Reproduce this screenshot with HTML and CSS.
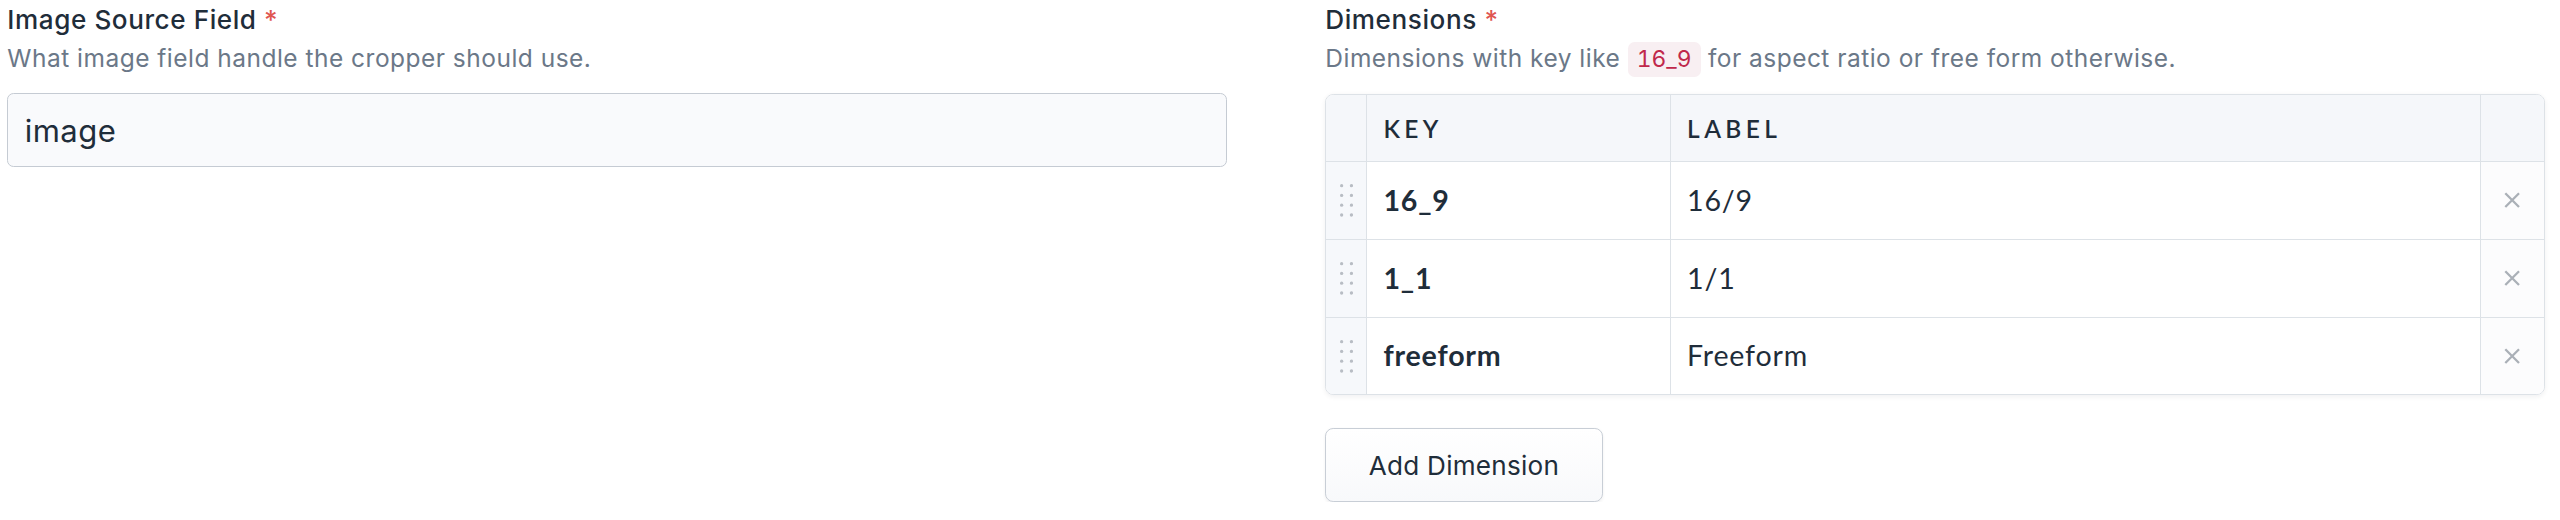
FILE: index.html
```html
<!DOCTYPE html>
<html lang="en">
<head>
<meta charset="utf-8">
<title>Cropper settings</title>
<link rel="stylesheet" href="styles.css">
</head>
<body>
<div class="page">
  <div class="field">
    <label class="label" for="src">Image Source Field <span class="req">*</span></label>
    <p class="desc">What image field handle the cropper should use.</p>
    <input id="src" class="input" type="text" value="image">
  </div>
  <div class="field">
    <div class="label">Dimensions <span class="req">*</span></div>
    <p class="desc">Dimensions with key like <code class="code">16_9</code> for aspect ratio or free form otherwise.</p>
    <div class="table">
      <div class="row head">
        <div class="cell drag"></div>
        <div class="cell th">Key</div>
        <div class="cell th">Label</div>
        <div class="cell del"></div>
      </div>
      <div class="row">
        <div class="cell drag"><svg class="dots" width="8" height="20" viewBox="0 0 8 20"><circle cx="1" cy="1" r="1"/><circle cx="7" cy="1" r="1"/><circle cx="1" cy="7" r="1"/><circle cx="7" cy="7" r="1"/><circle cx="1" cy="13" r="1"/><circle cx="7" cy="13" r="1"/><circle cx="1" cy="19" r="1"/><circle cx="7" cy="19" r="1"/></svg></div>
        <div class="cell key">16_9</div>
        <div class="cell val">16/9</div>
        <div class="cell del"><svg class="x" width="10" height="10" viewBox="0 0 10 10"><path d="M0.8 0.8L9.2 9.2M9.2 0.8L0.8 9.2"/></svg></div>
      </div>
      <div class="row">
        <div class="cell drag"><svg class="dots" width="8" height="20" viewBox="0 0 8 20"><circle cx="1" cy="1" r="1"/><circle cx="7" cy="1" r="1"/><circle cx="1" cy="7" r="1"/><circle cx="7" cy="7" r="1"/><circle cx="1" cy="13" r="1"/><circle cx="7" cy="13" r="1"/><circle cx="1" cy="19" r="1"/><circle cx="7" cy="19" r="1"/></svg></div>
        <div class="cell key">1_1</div>
        <div class="cell val">1/1</div>
        <div class="cell del"><svg class="x" width="10" height="10" viewBox="0 0 10 10"><path d="M0.8 0.8L9.2 9.2M9.2 0.8L0.8 9.2"/></svg></div>
      </div>
      <div class="row">
        <div class="cell drag"><svg class="dots" width="8" height="20" viewBox="0 0 8 20"><circle cx="1" cy="1" r="1"/><circle cx="7" cy="1" r="1"/><circle cx="1" cy="7" r="1"/><circle cx="7" cy="7" r="1"/><circle cx="1" cy="13" r="1"/><circle cx="7" cy="13" r="1"/><circle cx="1" cy="19" r="1"/><circle cx="7" cy="19" r="1"/></svg></div>
        <div class="cell key">freeform</div>
        <div class="cell val">Freeform</div>
        <div class="cell del"><svg class="x" width="10" height="10" viewBox="0 0 10 10"><path d="M0.8 0.8L9.2 9.2M9.2 0.8L0.8 9.2"/></svg></div>
      </div>
    </div>
    <button class="btn" type="button">Add Dimension</button>
  </div>
</div>
</body>
</html>
```

FILE: styles.css
```css
html {
  zoom: 1.6327;
}

body {
  margin: 0;
  background: #ffffff;
  font-family: Inter, "Noto Sans", sans-serif;
  color: #1f2d3a;
}

.page {
  display: grid;
  grid-template-columns: 1fr 1fr;
  column-gap: 60px;
  padding: 0 9px 0 4.5px;
  align-items: start;
}

.field {
  display: flex;
  flex-direction: column;
  align-items: flex-start;
}

.label {
  font-size: 16px;
  line-height: 24px;
  font-weight: 500;
  letter-spacing: 0.35px;
  color: #1f2d3a;
}

.req {
  color: #df5550;
}

.desc {
  margin: 2px 0 0;
  font-size: 15px;
  line-height: 20px;
  letter-spacing: 0.3px;
  color: #6b7888;
}

.code {
  font-family: Inter, sans-serif;
  font-feature-settings: "tnum";
  font-size: 14px;
  letter-spacing: 0;
  color: #c0284b;
  background: #f8eff2;
  padding: 2px 5.5px;
  border-radius: 4px;
}

.input {
  margin: 11px 0 0;
  width: 100%;
  height: 45.5px;
  box-sizing: border-box;
  padding: 0 10px;
  border: 1px solid #c5cbd3;
  border-radius: 4px;
  background: #f9fafc;
  font-family: Inter, sans-serif;
  font-size: 19px;
  letter-spacing: 0.3px;
  color: #1f2d3a;
  outline: none;
}

.table {
  margin-top: 11px;
  width: 100%;
  box-sizing: border-box;
  border: 1px solid #dde2e7;
  border-radius: 5px;
  overflow: hidden;
  box-shadow: 0 1px 3px rgba(16, 24, 40, 0.06);
  font-family: Lato, "Noto Sans", sans-serif;
  color: #1f2d3a;
}

.row {
  display: grid;
  grid-template-columns: 25px 186px 1fr 39px;
  height: 47.8px;
  box-sizing: border-box;
  border-bottom: 1px solid #dde2e7;
}

.row:last-child {
  height: 46.8px;
  border-bottom: 0;
}

.row.head {
  height: 41px;
  background: #f5f7fa;
}

.cell {
  display: flex;
  align-items: center;
  padding: 0 10px 1px;
  border-right: 1px solid #dde2e7;
  min-width: 0;
}

.cell:last-child {
  border-right: 0;
}

.drag,
.del {
  padding: 0;
  justify-content: center;
}

.drag {
  background: #f6f8fb;
}

.del {
  background: #fcfcfd;
}

.head .drag,
.head .del {
  background: transparent;
}

.th {
  font-size: 15px;
  font-weight: 600;
  letter-spacing: 0.18em;
  text-transform: uppercase;
  padding-bottom: 0;
}

.key {
  font-size: 17.5px;
  font-weight: 700;
  letter-spacing: 0.5px;
}

.val {
  font-size: 17.5px;
  font-weight: 400;
  letter-spacing: 0.5px;
}

.dots {
  fill: #b8bdc4;
}

.x {
  stroke: #aab0b7;
  stroke-width: 1.4;
  fill: none;
}

.btn {
  margin-top: 20px;
  height: 45.5px;
  padding: 0 26px;
  font-family: Inter, sans-serif;
  font-size: 16px;
  letter-spacing: 0.15px;
  color: #1f2d3a;
  border: 1px solid #c8ced6;
  border-radius: 5px;
  background: linear-gradient(#ffffff, #f8f9fb);
  box-shadow: 0 1px 2px rgba(16, 24, 40, 0.06);
}
```
